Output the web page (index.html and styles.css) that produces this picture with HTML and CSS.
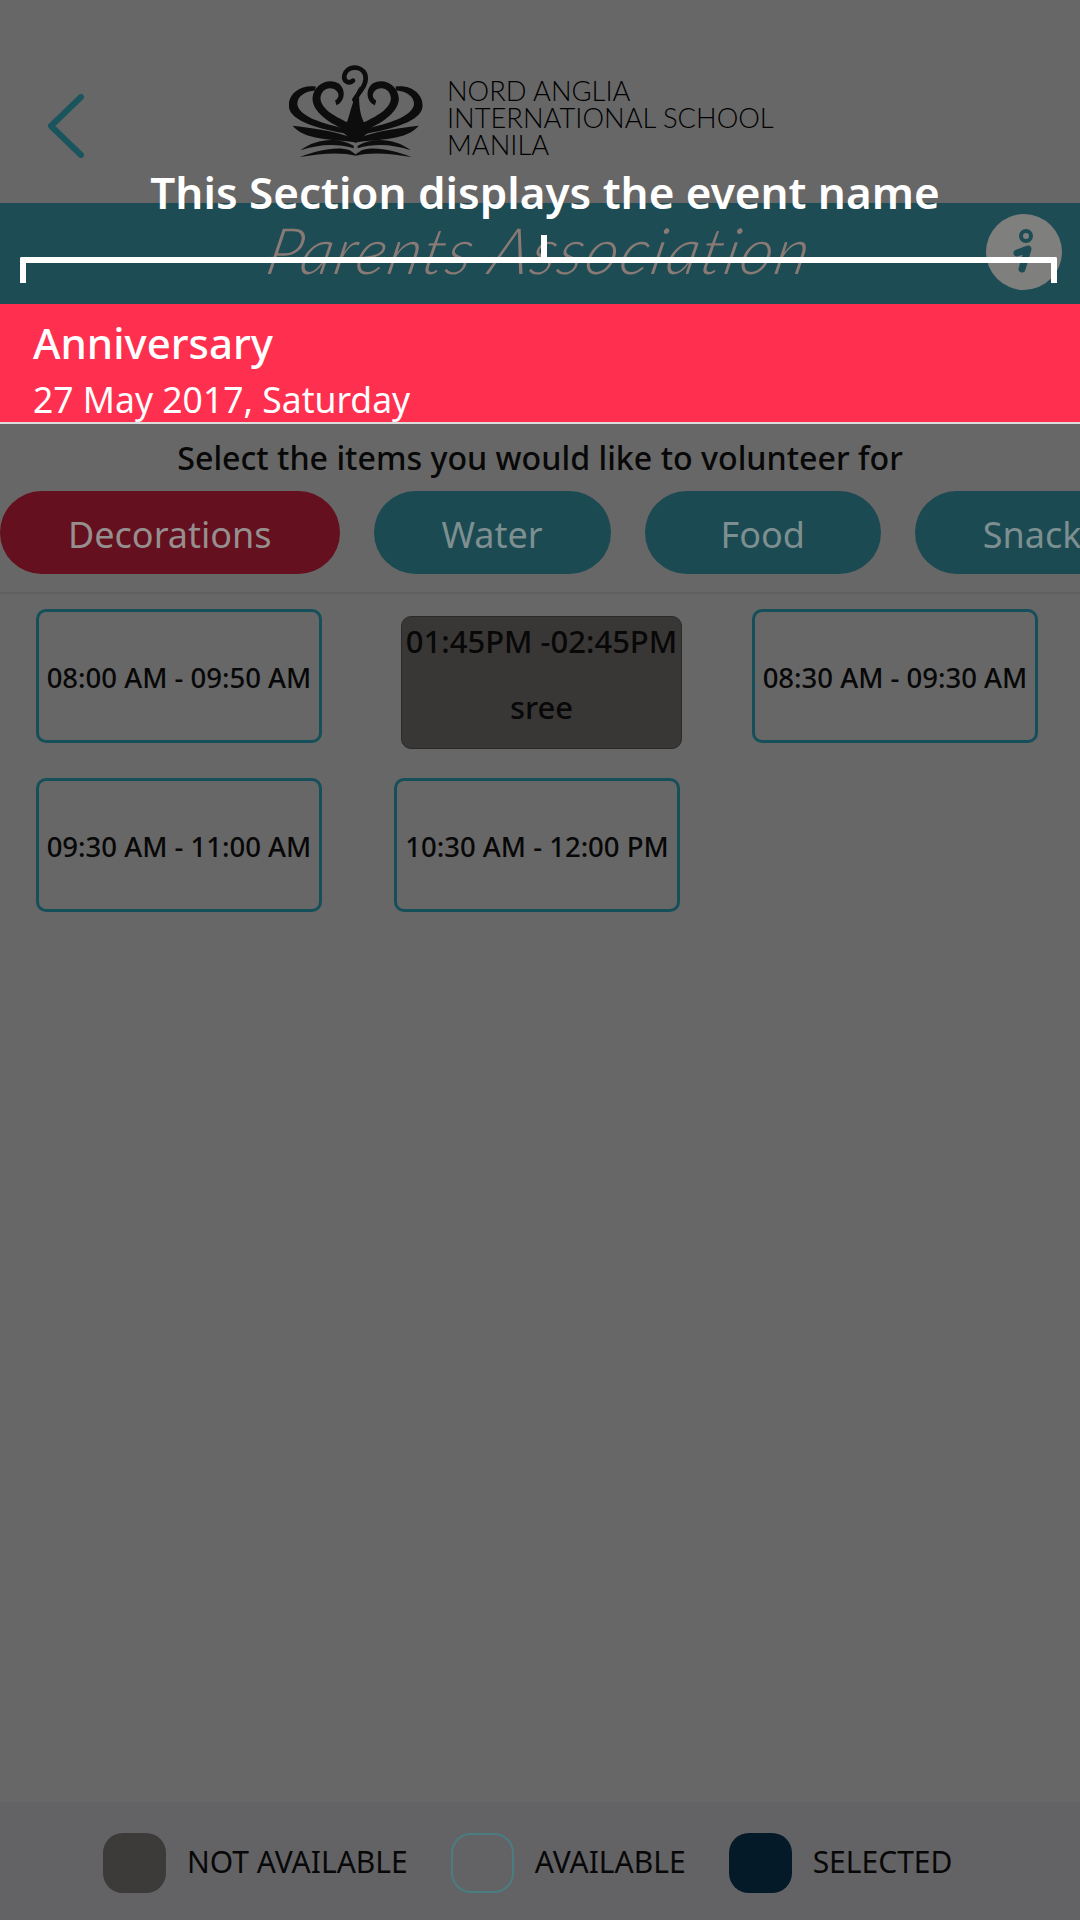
FILE: index.html
```html
<!DOCTYPE html>
<html>

<head>
  <meta charset="utf-8">
  <title>Volunteer</title>
  <meta name="viewport" content="width=device-width, initial-scale=1">
  <link rel="stylesheet" href="styles.css">
</head>

<body>
  <div id="app">
    <header class="top">
      <svg class="back" viewBox="0 0 40 64" width="40" height="64">
        <path d="M35 3 L5 32 L35 61" fill="none" stroke="#1a555e" stroke-width="6" stroke-linecap="round" stroke-linejoin="round" />
      </svg>
      <div class="logo">
        <svg class="crest" viewBox="88 45 402 280" width="134" height="93">
          <defs>
            <g id="crest-half">
              <path d="M168 110 C120 102 82 135 87 172 C92 212 170 238 272 254 L274 240 C205 226 128 206 114 170 C106 146 130 124 166 122 Z" fill="#0d0d0d" />
              <path d="M230 166 C254 158 262 120 236 100 C204 82 160 104 158 146 C158 192 222 228 278 250 L280 226 C238 206 184 182 182 146 C182 122 204 108 224 118 C240 128 240 144 226 152 Z" fill="#0d0d0d" />
              <path d="M98 228 C150 234 215 242 272 262 L288 278 C215 268 135 272 98 228 Z" fill="#0d0d0d" />
              <path d="M122 302 C165 268 235 260 282 288 L282 296 C230 280 175 284 122 302 Z" fill="#0d0d0d" />
              <path d="M120 322 C170 302 235 288 270 302 L288 314 L288 318 C240 306 180 312 120 322 Z" fill="#0d0d0d" />
            </g>
          </defs>
          <path d="M288 280 L240 240 C270 232 266 176 300 108 C294 170 304 226 336 240 Z" fill="#0d0d0d" />
          <path d="M284 150 C302 122 326 100 316 72 C304 44 260 48 254 76 C250 96 268 102 280 92" fill="none" stroke="#0d0d0d" stroke-width="14" stroke-linecap="round" />
          <use href="#crest-half" />
          <use href="#crest-half" transform="translate(576 0) scale(-1 1)" />
        </svg>
        <div class="logo-text">
          <span>NORD ANGLIA</span>
          <span>INTERNATIONAL SCHOOL</span>
          <span>MANILA</span>
        </div>
      </div>
    </header>

    <div class="band">
      <span class="band-title">Parents Association</span>
      <span class="info">
        <svg viewBox="0 0 76 76" width="76" height="76">
          <circle cx="40" cy="22" r="5" fill="none" stroke="#1d4c54" stroke-width="4" />
          <path d="M31 39 L42 35 L36 55" fill="none" stroke="#1d4c54" stroke-width="7" stroke-linecap="round" stroke-linejoin="round" />
        </svg>
      </span>
    </div>

    <div class="event">
      <div class="event-name">Anniversary</div>
      <div class="event-date">27 May 2017, Saturday</div>
    </div>

    <p class="prompt">Select the items you would like to volunteer for</p>

    <div class="tabs">
      <div class="tab active">Decorations</div>
      <div class="tab">Water</div>
      <div class="tab">Food</div>
      <div class="tab">Snacks</div>
    </div>

    <div class="slots">
      <div class="slot">08:00 AM - 09:50 AM</div>
      <div class="slot taken">
        <span>01:45PM -02:45PM</span>
        <span>sree</span>
      </div>
      <div class="slot">08:30 AM - 09:30 AM</div>
      <div class="slot">09:30 AM - 11:00 AM</div>
      <div class="slot">10:30 AM - 12:00 PM</div>
    </div>

    <footer class="legend">
      <div class="key"><i class="swatch grey"></i>NOT AVAILABLE</div>
      <div class="key"><i class="swatch open"></i>AVAILABLE</div>
      <div class="key"><i class="swatch navy"></i>SELECTED</div>
    </footer>

    <!-- help overlay -->
    <div class="tip">This Section displays the event name</div>
    <div class="bracket"></div>
  </div>
</body>

</html>
```

FILE: styles.css
```css
* {
  padding: 0px;
  margin: 0px;
  box-sizing: border-box;
}

body {
  background-color: #676767;
  font-family: "Noto Sans", sans-serif;
  color: #080808;
}

#app {
  position: relative;
  width: 1080px;
  height: 1920px;
  display: flex;
  flex-direction: column;
  overflow: hidden;
}

.top {
  height: 203px;
  padding: 65px 0 0 46px;
  display: flex;
  align-items: flex-start;
}

.back {
  margin-top: 29px;
}

.logo {
  margin-left: 203px;
  display: flex;
}

.logo-text {
  margin-left: 24px;
  padding-top: 12px;
  display: flex;
  flex-direction: column;
  font-family: Lato, sans-serif;
  font-weight: 300;
  font-size: 27.3px;
  line-height: 27px;
  color: #000;
}

.band {
  height: 101px;
  background-color: #1d4c54;
  position: relative;
  display: flex;
  align-items: center;
  justify-content: center;
}

.band-title {
  margin-bottom: 8px;
  font-family: Lato, sans-serif;
  font-style: italic;
  font-weight: 300;
  font-size: 64px;
  letter-spacing: 2px;
  color: #8a7a75;
  transform: skewX(-12deg);
}

.info {
  position: absolute;
  left: 986px;
  top: 11px;
  width: 76px;
  height: 76px;
  border-radius: 50%;
  background-color: #7f7f7d;
}

.event {
  height: 120px;
  padding: 12px 33px 0;
  background-color: #ff304f;
  border-bottom: 2px solid #dcdcdc;
  color: #fff;
}

.event-name {
  font-size: 42px;
  font-weight: 500;
  line-height: 54px;
}

.event-date {
  margin-top: 4px;
  font-size: 35.5px;
  line-height: 50px;
}

.prompt {
  margin-top: 12px;
  font-size: 32.2px;
  font-weight: 500;
  line-height: 44px;
  text-align: center;
}

.tabs {
  margin-top: 11px;
  height: 103px;
  display: flex;
  gap: 34px;
  border-bottom: 2px solid #5f5f5f;
}

.tab {
  flex: none;
  height: 83px;
  min-width: 236px;
  padding: 0 68px;
  border-radius: 42px;
  background-color: #1c4a52;
  color: #7d8f90;
  font-size: 36px;
  line-height: 87px;
  text-align: center;
}

.tab.active {
  background-color: #65101e;
  color: #958f90;
}

.slots {
  padding: 15px 0 0 36px;
  display: grid;
  grid-template-columns: repeat(3, 358px);
  row-gap: 35px;
  grid-auto-rows: 134px;
}

.slot {
  width: 286px;
  padding-top: 2px;
  border: 3px solid #15505a;
  border-radius: 10px;
  display: flex;
  align-items: center;
  justify-content: center;
  font-size: 27.5px;
  font-weight: 500;
  white-space: nowrap;
}

.slot.taken {
  margin: 7px 0 -6px 7px;
  width: 281px;
  padding-top: 3px;
  border: 1px solid #2a2a2a;
  background-color: #383735;
  flex-direction: column;
  justify-content: flex-start;
  gap: 24px;
  font-size: 31px;
}

.legend {
  margin-top: auto;
  height: 118px;
  background-color: #636365;
  display: flex;
  align-items: center;
  padding: 0 0 0 103px;
  font-size: 30px;
}

.key {
  display: flex;
  align-items: center;
  gap: 21px;
  margin-right: 43px;
}

.swatch {
  width: 63px;
  height: 60px;
  margin-top: 4px;
  border-radius: 20px;
}

.swatch.grey {
  background-color: #3c3b39;
}

.swatch.open {
  border: 2px solid #4a7d82;
}

.swatch.navy {
  background-color: #051a28;
}

/* overlay */
.tip {
  position: absolute;
  left: 0;
  top: 163px;
  width: 1090px;
  text-align: center;
  color: #fff;
  font-size: 44px;
  font-weight: 600;
  line-height: 58px;
}

.bracket {
  position: absolute;
  left: 20px;
  top: 257px;
  width: 1037px;
  height: 26px;
  border: 6px solid #fff;
  border-bottom: none;
  border-radius: 2px 2px 0 0;
}

.bracket::before {
  content: "";
  position: absolute;
  left: 515px;
  top: -28px;
  width: 6px;
  height: 24px;
  background-color: #fff;
}
```
